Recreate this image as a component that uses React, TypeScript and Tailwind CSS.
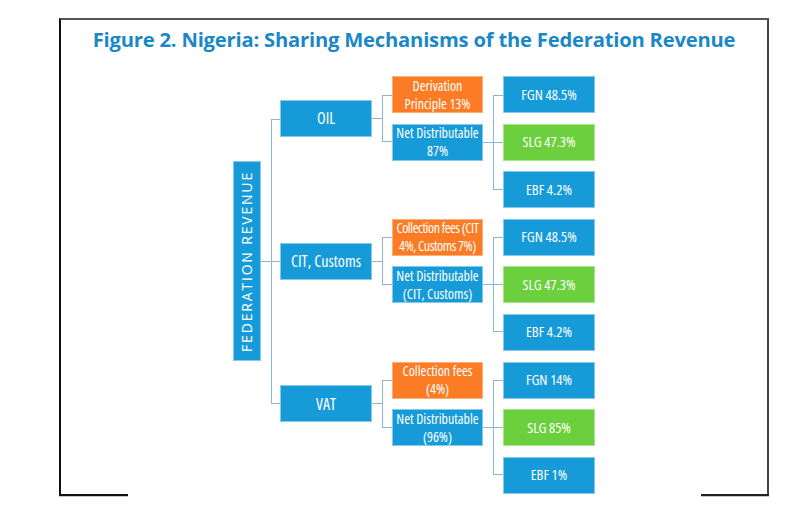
// Figure 2 – Nigeria: sharing mechanisms of the Federation Revenue

import React from 'react';

type Tone = 'blue' | 'orange' | 'green';

const toneClass: Record<Tone, string> = {
  blue: 'bg-[#169bd8] border-[#86c9ee]',
  orange: 'bg-[#fb7c24] border-[#fbb07a]',
  green: 'bg-[#6cd03e] border-[#a9e58a]',
};

interface BoxProps {
  tone?: Tone;
  className?: string;
  children: React.ReactNode;
}

function Box({ tone = 'blue', className = '', children }: BoxProps) {
  return (
    <div
      className={`flex items-center justify-center text-center text-white whitespace-nowrap [font-stretch:75%] border ${toneClass[tone]} ${className}`}
    >
      <span>{children}</span>
    </div>
  );
}

// horizontal tick into a bracket that spans from the first to the last child centre
function Bracket({ className = '', inset, middle = false }: { className?: string; inset: string; middle?: boolean }) {
  return (
    <div className={`flex items-center ${className}`}>
      <div className="w-[10px] h-px bg-[#8ab6d8] flex-shrink-0" />
      <div className={`flex-1 self-stretch border-l border-y border-[#8ab6d8] flex items-center ${inset}`}>
        {middle && <div className="h-px w-full bg-[#8ab6d8]" />}
      </div>
    </div>
  );
}

interface Group {
  name: string;
  span: string; // rows for the L1 box & its bracket
  fee: React.ReactNode;
  feeTracking: string;
  net: React.ReactNode;
  rows: [string, string, string];
  shareSpan: string;
  shares: [string, string, string];
}

const groups: Group[] = [
  {
    name: 'OIL',
    span: 'row-start-1 row-span-2',
    fee: <>Derivation<br />Principle 13%</>,
    feeTracking: '',
    net: <>Net Distributable<br />87%</>,
    rows: ['row-start-1', 'row-start-2', 'row-start-3'],
    shareSpan: 'row-start-1 row-span-3',
    shares: ['FGN 48.5%', 'SLG 47.3%', 'EBF 4.2%'],
  },
  {
    name: 'CIT, Customs',
    span: 'row-start-4 row-span-2',
    fee: <>Collection fees (CIT<br />4%, Customs 7%)</>,
    feeTracking: 'tracking-[-0.45px]',
    net: <>Net Distributable<br />(CIT, Customs)</>,
    rows: ['row-start-4', 'row-start-5', 'row-start-6'],
    shareSpan: 'row-start-4 row-span-3',
    shares: ['FGN 48.5%', 'SLG 47.3%', 'EBF 4.2%'],
  },
  {
    name: 'VAT',
    span: 'row-start-7 row-span-2',
    fee: <>Collection fees<br />(4%)</>,
    feeTracking: '',
    net: <>Net Distributable<br />(96%)</>,
    rows: ['row-start-7', 'row-start-8', 'row-start-9'],
    shareSpan: 'row-start-7 row-span-3',
    shares: ['FGN 14%', 'SLG 85%', 'EBF 1%'],
  },
];

export default function App() {
  return (
    <div className="w-[800px] h-[530px] bg-white pt-[18px] pl-[59px] font-['Open_Sans',sans-serif]">
      <div className="w-[710px] border-l-2 border-l-[#111] border-t-2 border-t-[#555] border-r-2 border-r-[#444]">
        <div className="h-[38px] flex items-center justify-center">
          <h1 className="text-[20.2px] font-bold text-[#1a88c6] tracking-[-0.2px]">
            Figure 2. Nigeria: Sharing Mechanisms of the Federation Revenue
          </h1>
        </div>

        <div className="mt-[18px] ml-[172px] grid grid-cols-[28px_19px_92px_20px_91px_20px_92px] grid-rows-[repeat(9,37px)] gap-y-[10.6px]">
          <div className="col-start-1 row-start-1 row-span-8 self-center h-[200px] bg-[#169bd8] border border-[#86c9ee] flex items-center justify-center">
            <span className="[writing-mode:vertical-rl] rotate-180 text-white text-[14px] tracking-[0.13em] leading-none">
              FEDERATION REVENUE
            </span>
          </div>
          <Bracket className="col-start-2 row-start-1 row-span-8" inset="my-[42.5px]" middle />

          {groups.map((g) => (
            <React.Fragment key={g.name}>
              <Box className={`col-start-3 ${g.span} self-center h-[37px] text-[16px] leading-[20px]`}>{g.name}</Box>
              <Bracket className={`col-start-4 ${g.span}`} inset="my-[18.5px]" />
              <Box tone="orange" className={`col-start-5 ${g.rows[0]} text-[14px] leading-[18px] ${g.feeTracking}`}>
                {g.fee}
              </Box>
              <Box className={`col-start-5 ${g.rows[1]} text-[14px] leading-[18px]`}>{g.net}</Box>
              <Bracket className={`col-start-6 ${g.shareSpan}`} inset="my-[18.5px]" middle />
              {g.shares.map((s, i) => (
                <Box
                  key={s + i}
                  tone={i === 1 ? 'green' : 'blue'}
                  className={`col-start-7 ${g.rows[i]} text-[14.5px] leading-[18px]`}
                >
                  {s}
                </Box>
              ))}
            </React.Fragment>
          ))}
        </div>

        <div className="flex justify-between -mx-[2px]">
          <div className="w-[69px] h-[3px] border-t-2 border-[#111] border-b border-b-[#c8c8c8]" />
          <div className="w-[68px] h-[3px] border-t-2 border-[#222] border-b border-b-[#c8c8c8]" />
        </div>
      </div>
    </div>
  );
}
